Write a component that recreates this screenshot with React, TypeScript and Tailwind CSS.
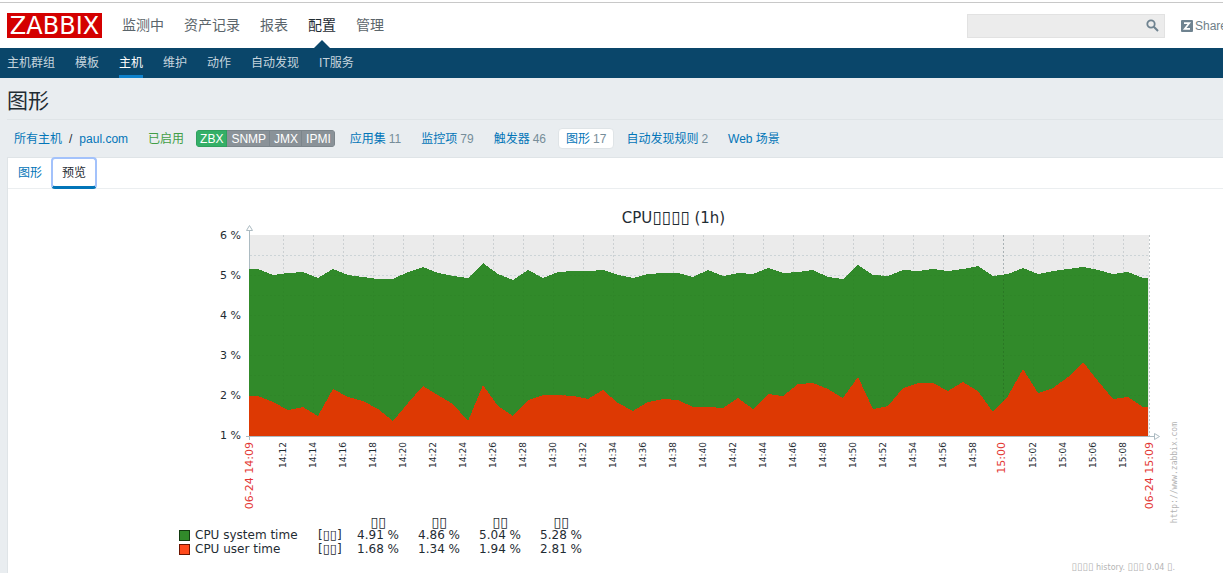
import React from "react";

const systemY = [
  269, 269, 275, 273, 272, 278, 269, 275, 277, 279, 279, 272, 267, 273, 276, 278, 263, 274, 280, 270, 278, 272, 271, 271,
  270, 275, 278, 274, 273, 273, 277, 270, 276, 273, 274, 268, 273, 272, 270, 277, 279, 265, 275, 276, 270, 271, 269, 271,
  269, 266, 276, 274, 268, 274, 271, 269, 267, 270, 274, 272, 278, 278,
];
const userY = [
  396, 396, 402, 410, 407, 416, 389, 397, 401, 409, 421, 403, 386, 395, 404, 421, 385, 406, 416, 400, 395, 395, 396, 399,
  390, 403, 411, 402, 399, 400, 407, 407, 408, 398, 409, 394, 396, 384, 383, 389, 398, 377, 409, 406, 388, 383, 383, 391,
  382, 391, 412, 396, 369, 393, 388, 377, 362, 381, 399, 397, 407, 407,
];

const xAt = (i: number) => Math.min(1148, Math.max(249, 243 + 15 * i));
const line = (ys: number[]) => ys.map((y, i) => `L${xAt(i)} ${y}`).join(" ");
const area = (ys: number[]) => `M249 436 ${line(ys)} L1148 436Z`;
const userReversed = userY.map((_, i) => `L${xAt(61 - i)} ${userY[61 - i]}`).join(" ");

const ticks = Array.from({ length: 29 }, (_, i) => {
  const m = 12 + 2 * i;
  const hour = 14 + Math.floor(m / 60);
  return { x: 283 + 30 * i, label: `${hour}:${String(m % 60).padStart(2, "0")}`, major: m === 60 };
});

const gridRows = Array.from({ length: 9 }, (_, i) => 255 + 20 * i);

const dateLabels: [number, string][] = [
  [253, "06-24 14:09"],
  [1153, "06-24 15:09"],
];

function Chart() {
  return (
    <svg
      width="980"
      height="291"
      viewBox="209 225 980 291"
      className="block shrink-0 overflow-visible font-['DejaVu_Sans',sans-serif]"
      role="img"
      aria-label="CPU"
    >
      <defs>
        <clipPath id="above">
          <path d={`M249 235 ${line(systemY)} L1148 235Z`} />
        </clipPath>
        <clipPath id="green">
          <path d={`M249 269 ${line(systemY)} ${userReversed}Z`} />
        </clipPath>
      </defs>
      <g shapeRendering="crispEdges">
        <rect x="249" y="235" width="900" height="201" fill="#ebebeb" />
        <path d={area(systemY)} fill="#318a2a" />
        <path d={area(userY)} fill="#dd3903" />
        <g strokeDasharray="2 2">
          {gridRows.map((y) => (
            <g key={y}>
              <path d={`M250 ${y}.5H1149`} stroke="#ccd4d7" clipPath="url(#above)" />
              <path d={`M250 ${y}.5H1149`} stroke="#2f8628" clipPath="url(#green)" />
            </g>
          ))}
          {ticks.map((t) => (
            <g key={t.x}>
              <path d={`M${t.x}.5 235V436`} stroke={t.major ? "#a9b1b4" : "#ccd0d2"} clipPath="url(#above)" />
              <path d={`M${t.x}.5 235V436`} stroke={t.major ? "#2a7824" : "#2f8628"} clipPath="url(#green)" />
            </g>
          ))}
          <path d="M1149.5 235V436" stroke="#c4c9cb" />
        </g>
        <path d="M249.5 231V269" stroke="#acbbc2" />
        <path d="M246 436.5H1154M249.5 436V440" stroke="#acbbc2" />
      </g>
      <path d="M246.5 230.5H252.5L249.5 225.5Z" fill="#fff" stroke="#acbbc2" />
      <path d="M1154.5 433.5V439.5L1159.5 436.5Z" fill="#fff" stroke="#acbbc2" />
      <g fontSize="11" fill="#1f2c33" textAnchor="end">
        {[6, 5, 4, 3, 2, 1].map((v, i) => (
          <text key={v} x="241" y={239 + 40 * i}>
            {v} %
          </text>
        ))}
      </g>
      <g textAnchor="end">
        {ticks.map((t) => (
          <text
            key={t.x}
            transform={`translate(${t.major ? 1005 : t.x + 3} 442) rotate(-90)`}
            fontSize={t.major ? 11 : 9}
            fill={t.major ? "#e33734" : "#1f2c33"}
          >
            {t.label}
          </text>
        ))}
        {dateLabels.map(([x, label]) => (
          <text key={x} transform={`translate(${x} 442) rotate(-90)`} fontSize="11" fill="#e33734">
            {label}
          </text>
        ))}
        <text
          transform="translate(1177 422) rotate(-90)"
          fontSize="8"
          fill="#b4b4b4"
          className="font-['DejaVu_Sans_Mono',monospace]"
        >
          http://www.zabbix.com
        </text>
      </g>
    </svg>
  );
}

const legend = [
  { name: "CPU system time", box: "bg-[#318a2a] border-[#123a10]", values: ["4.91 %", "4.86 %", "5.04 %", "5.28 %"] },
  { name: "CPU user time", box: "bg-[#ff4a1c] border-[#6d1500]", values: ["1.68 %", "1.34 %", "1.94 %", "2.81 %"] },
];

const mainMenu = ["监测中", "资产记录", "报表", "配置", "管理"];
const subMenu = ["主机群组", "模板", "主机", "维护", "动作", "自动发现", "IT服务"];
const objectLinks: [string, string][] = [
  ["应用集", "11"],
  ["监控项", "79"],
  ["触发器", "46"],
  ["图形", "17"],
  ["自动发现规则", "2"],
  ["Web 场景", ""],
];

export default function App() {
  return (
    <div className="min-h-screen overflow-hidden bg-[#e9edf0] font-['Liberation_Sans','Noto_Sans_CJK_SC',sans-serif] text-xs text-[#1f2c33]">
      <header className="bg-white pt-[2px]">
        <div className="flex h-[46px] items-center border-t border-[#c8c8c8] pl-[7px]">
          <a
            href="#"
            className="flex h-[25px] w-[95px] shrink-0 items-center justify-center bg-[#d40000] font-['DejaVu_Sans',sans-serif] text-2xl leading-none text-white"
          >
            ZABBIX
          </a>
          <nav className="ml-5 flex h-full gap-5 text-sm text-[#5b656b]">
            {mainMenu.map((m) => (
              <a
                key={m}
                href="#"
                className={"relative flex items-center whitespace-nowrap pb-[2px] " + (m === "配置" ? "text-[#1f2c33]" : "")}
              >
                {m}
                {m === "配置" && (
                  <span className="absolute bottom-0 left-1/2 -ml-2 border-x-8 border-b-8 border-x-transparent border-b-[#0a466a]" />
                )}
              </a>
            ))}
          </nav>
          <form className="ml-auto flex h-6 w-[198px] shrink-0 items-center border border-[#e2e2e2] bg-[#ececec]">
            <input aria-label="Search" className="h-full min-w-0 flex-1 bg-transparent px-1 outline-none" />
            <button type="button" aria-label="Search" className="px-[5px]">
              <svg width="13" height="13" viewBox="0 0 13 13" fill="none" stroke="#6f8390">
                <circle cx="5" cy="5" r="3.7" strokeWidth="1.8" />
                <path d="M7.8 7.8L12 12" strokeWidth="2" />
              </svg>
            </button>
          </form>
          <a href="#" className="-mr-1 ml-4 flex shrink-0 items-center gap-[2px] text-[#6f7f89]">
            <svg width="12" height="12" viewBox="0 0 12 12">
              <rect width="12" height="12" rx="1" fill="#6f8390" />
              <path d="M3 3.2H8.2L3.8 8.8H9" fill="none" stroke="#fff" strokeWidth="1.8" />
            </svg>
            Share
          </a>
        </div>
        <nav className="flex h-[30px] gap-5 bg-[#0a466a] pl-[7px] text-[#c6d5de]">
          {subMenu.map((m) => (
            <a
              key={m}
              href="#"
              className={
                "flex items-center whitespace-nowrap border-b-[3px] pt-[3px] " +
                (m === "主机" ? "border-[#0f82cc] text-white" : "border-transparent")
              }
            >
              {m}
            </a>
          ))}
        </nav>
      </header>

      <main className="pl-[7px]">
        <h1 className="flex h-[42px] items-center border-b border-[#dfe4e7] pt-1 text-[21px]">图形</h1>
        <div className="flex h-[37px] items-center whitespace-nowrap pl-[7px] text-[#0275b8]">
          <a href="#">所有主机</a>
          <span className="mx-[7px] text-[#1f2c33]">/</span>
          <a href="#">paul.com</a>
          <span className="ml-5 text-[#429e47]">已启用</span>
          <span className="ml-3 flex h-[17px] overflow-hidden rounded-sm text-white">
            <span className="flex items-center border border-[#2f9f5e] bg-[#34af67] px-[3px]">ZBX</span>
            {["SNMP", "JMX", "IPMI"].map((t) => (
              <span key={t} className="flex items-center border-y border-r border-[#7c858b] bg-[#8a9298] pl-1 pr-[3px]">
                {t}
              </span>
            ))}
          </span>
          <nav className="ml-[7px] flex gap-1">
            {objectLinks.map(([name, count]) => (
              <a
                key={name}
                href="#"
                className={
                  "flex h-[21px] items-center gap-[3px] rounded-sm border px-[7px] " +
                  (name === "图形" ? "border-[#dfe4e7] bg-white" : "border-transparent")
                }
              >
                {name}
                {count && <span className="text-[#768d99]">{count}</span>}
              </a>
            ))}
          </nav>
        </div>

        <section className="min-h-[416px] border-l border-t border-[#dfe4e7] bg-white">
          <div role="tablist" className="flex h-[31px] border-b border-[#ebeef0]">
            <button role="tab" className="pl-[10px] pr-[9px] text-[#0275b8]">
              图形
            </button>
            <button
              role="tab"
              aria-selected="true"
              className="-mt-px h-8 rounded-sm border-2 border-b-[3px] border-[#a3c2fb] border-b-[#0275b8] px-[9px]"
            >
              预览
            </button>
          </div>
          <div className="ml-[164px] w-[1003px] pt-5 font-['DejaVu_Sans',sans-serif]">
            <h2 className="h-4 text-center text-[15px] leading-[18px]">
              CPU<span className="text-[17px] leading-[0]">▯▯▯▯</span> (1h)
            </h2>
            <div className="pl-[37px]">
              <Chart />
            </div>
            <table className="ml-[7px] w-[403px] table-fixed border-collapse text-xs leading-[14px]">
              <colgroup>
                <col className="w-[139px]" />
                <col className="w-[20px]" />
                <col span={4} className="w-[61px]" />
              </colgroup>
              <thead>
                <tr className="text-sm leading-3">
                  <td />
                  <td />
                  {legend[0].values.map((k) => (
                    <th key={k} className="p-0 pr-[13px] text-right font-normal">
                      ▯▯
                    </th>
                  ))}
                </tr>
              </thead>
              <tbody>
                {legend.map((row) => (
                  <tr key={row.name}>
                    <td className="p-0">
                      <span className="flex items-center gap-[5px]">
                        <span className={"h-[11px] w-[11px] border " + row.box} />
                        {row.name}
                      </span>
                    </td>
                    <td className="whitespace-nowrap p-0">
                      [<span className="text-[13px] leading-[0]">▯▯</span>]
                    </td>
                    {row.values.map((v) => (
                      <td key={v} className="p-0 text-right">
                        {v}
                      </td>
                    ))}
                  </tr>
                ))}
              </tbody>
            </table>
            <p className="pt-1 text-right text-[8px] leading-4 text-[#b4b4b4]">
              <span className="text-[10px] leading-[0]">▯▯▯▯</span> history.{" "}
              <span className="text-[10px] leading-[0]">▯▯▯</span> 0.04{" "}
              <span className="text-[10px] leading-[0]">▯</span>.
            </p>
          </div>
        </section>
      </main>
    </div>
  );
}
